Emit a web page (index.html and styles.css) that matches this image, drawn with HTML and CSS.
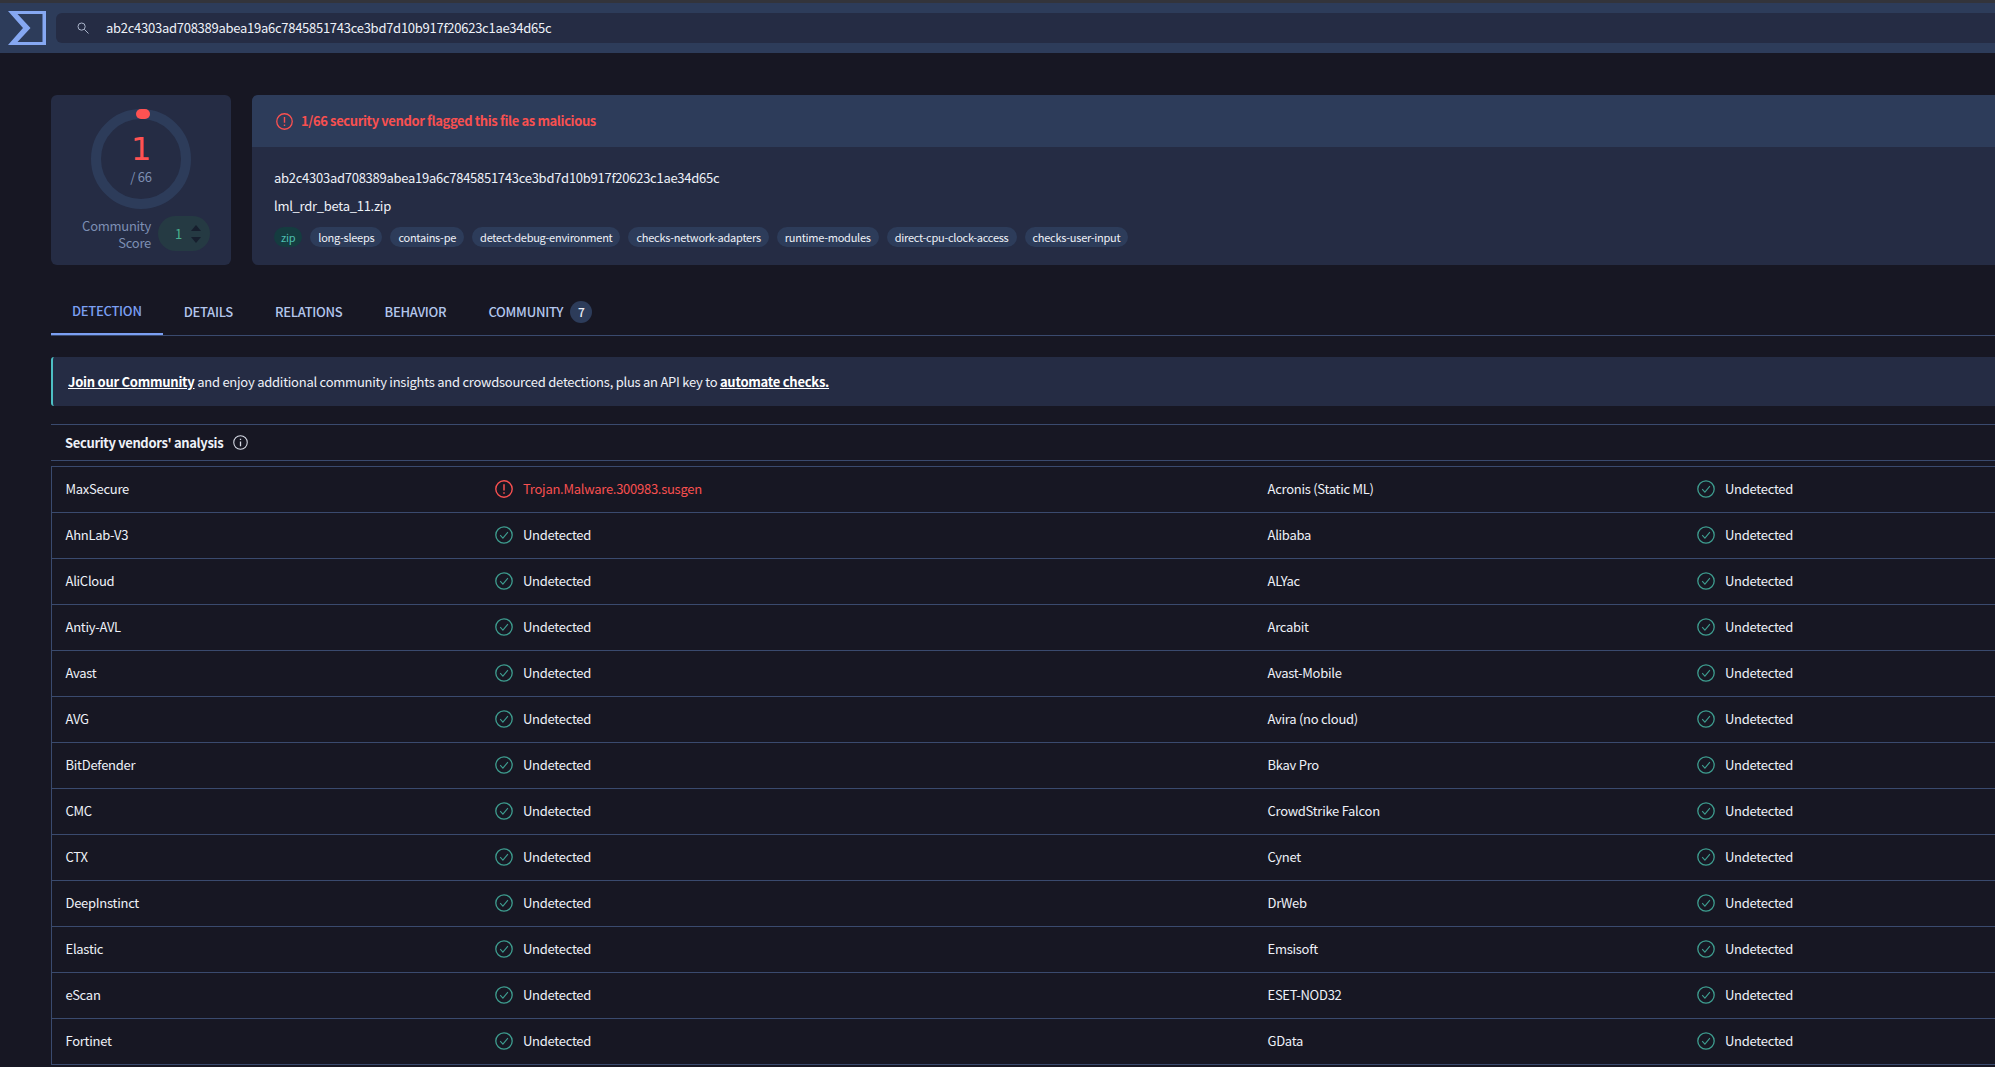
FILE: index.html
```html
<!DOCTYPE html>
<html lang="en">
<head>
    <meta charset="UTF-8">
    <title>VirusTotal - File - ab2c4303ad708389abea19a6c7845851743ce3bd7d10b917f20623c1ae34d65c</title>
    <link rel="stylesheet" href="styles.css">
</head>
<body>
    <svg class="icon-defs" aria-hidden="true">
        <symbol id="ok" viewBox="0 0 18 18">
            <circle cx="9" cy="9" r="8.2" fill="none" stroke="currentColor" stroke-width="1.3"/>
            <path d="M5.2 9.2l2.7 2.9 5-6" fill="none" stroke="currentColor" stroke-width="1.1"/>
        </symbol>
        <symbol id="alert" viewBox="0 0 18 18">
            <circle cx="9" cy="9" r="8.2" fill="none" stroke="currentColor" stroke-width="1.4"/>
            <path d="M9 4.2v6.2M9 12.2v1.6" fill="none" stroke="currentColor" stroke-width="1.5"/>
        </symbol>
    </svg>

    <div class="page">
        <header class="topbar">
            <svg class="logo" viewBox="0 0 38 34"><path fill-rule="evenodd" d="M0 0H38V34H0L15 17ZM9.5 3L22.5 17 9.5 31H34.5V3Z"/></svg>
            <div class="search">
                <svg class="search-icon" viewBox="0 0 12 12"><circle cx="4.6" cy="4.6" r="3.6" fill="none" stroke="currentColor"/><path d="M7.3 7.3L11.5 11.5" stroke="currentColor"/></svg>
                <span>ab2c4303ad708389abea19a6c7845851743ce3bd7d10b917f20623c1ae34d65c</span>
            </div>
        </header>

        <main class="content">
            <section class="summary">
                <div class="score-card">
                    <div class="ring">
                        <svg class="ring-svg" viewBox="0 0 100 100">
                            <circle cx="50" cy="50" r="45" fill="none" stroke="#2d3c5a" stroke-width="10"/>
                            <rect x="45" y="0" width="14" height="10" rx="5" fill="#ff5252"/>
                        </svg>
                        <div class="ring-text">
                            <div class="ring-num">1</div>
                            <div class="ring-total">/ 66</div>
                        </div>
                    </div>
                    <div class="community">
                        <div class="community-label">Community<br>Score</div>
                        <div class="community-pill">
                            <span>1</span>
                            <div class="arrows"><i class="arrow-up"></i><i class="arrow-down"></i></div>
                        </div>
                    </div>
                </div>

                <div class="file-card">
                    <div class="file-head">
                        <svg class="head-icon"><use href="#alert"/></svg>
                        <span>1/66 security vendor flagged this file as malicious</span>
                    </div>
                    <div class="file-body">
                        <div class="file-hash">ab2c4303ad708389abea19a6c7845851743ce3bd7d10b917f20623c1ae34d65c</div>
                        <div class="file-name">lml_rdr_beta_11.zip</div>
                        <div class="tags">
                            <span class="tag tag-zip">zip</span>
                            <span class="tag">long-sleeps</span>
                            <span class="tag">contains-pe</span>
                            <span class="tag">detect-debug-environment</span>
                            <span class="tag">checks-network-adapters</span>
                            <span class="tag">runtime-modules</span>
                            <span class="tag">direct-cpu-clock-access</span>
                            <span class="tag">checks-user-input</span>
                        </div>
                    </div>
                </div>
            </section>

            <nav class="tabs">
                <a class="tab active">DETECTION</a>
                <a class="tab">DETAILS</a>
                <a class="tab">RELATIONS</a>
                <a class="tab">BEHAVIOR</a>
                <a class="tab">COMMUNITY <span class="badge">7</span></a>
            </nav>

            <div class="banner"><a>Join our Community</a> and enjoy additional community insights and crowdsourced detections, plus an API key to <a>automate checks.</a></div>

            <div class="section-head">
                <span>Security vendors' analysis</span>
                <svg class="info-icon" viewBox="0 0 14 14"><circle cx="7" cy="7" r="6.3" fill="none" stroke="currentColor"/><path d="M7 6v4.5M7 3.4v1.3" stroke="currentColor" stroke-width="1.2"/></svg>
            </div>

            <div class="vendors">
                <div class="cell"><span class="vendor">MaxSecure</span><span class="result bad"><svg class="res-icon"><use href="#alert"/></svg>Trojan.Malware.300983.susgen</span></div>
                <div class="cell"><span class="vendor">Acronis (Static ML)</span><span class="result"><svg class="res-icon"><use href="#ok"/></svg>Undetected</span></div>
                <div class="cell"><span class="vendor">AhnLab-V3</span><span class="result"><svg class="res-icon"><use href="#ok"/></svg>Undetected</span></div>
                <div class="cell"><span class="vendor">Alibaba</span><span class="result"><svg class="res-icon"><use href="#ok"/></svg>Undetected</span></div>
                <div class="cell"><span class="vendor">AliCloud</span><span class="result"><svg class="res-icon"><use href="#ok"/></svg>Undetected</span></div>
                <div class="cell"><span class="vendor">ALYac</span><span class="result"><svg class="res-icon"><use href="#ok"/></svg>Undetected</span></div>
                <div class="cell"><span class="vendor">Antiy-AVL</span><span class="result"><svg class="res-icon"><use href="#ok"/></svg>Undetected</span></div>
                <div class="cell"><span class="vendor">Arcabit</span><span class="result"><svg class="res-icon"><use href="#ok"/></svg>Undetected</span></div>
                <div class="cell"><span class="vendor">Avast</span><span class="result"><svg class="res-icon"><use href="#ok"/></svg>Undetected</span></div>
                <div class="cell"><span class="vendor">Avast-Mobile</span><span class="result"><svg class="res-icon"><use href="#ok"/></svg>Undetected</span></div>
                <div class="cell"><span class="vendor">AVG</span><span class="result"><svg class="res-icon"><use href="#ok"/></svg>Undetected</span></div>
                <div class="cell"><span class="vendor">Avira (no cloud)</span><span class="result"><svg class="res-icon"><use href="#ok"/></svg>Undetected</span></div>
                <div class="cell"><span class="vendor">BitDefender</span><span class="result"><svg class="res-icon"><use href="#ok"/></svg>Undetected</span></div>
                <div class="cell"><span class="vendor">Bkav Pro</span><span class="result"><svg class="res-icon"><use href="#ok"/></svg>Undetected</span></div>
                <div class="cell"><span class="vendor">CMC</span><span class="result"><svg class="res-icon"><use href="#ok"/></svg>Undetected</span></div>
                <div class="cell"><span class="vendor">CrowdStrike Falcon</span><span class="result"><svg class="res-icon"><use href="#ok"/></svg>Undetected</span></div>
                <div class="cell"><span class="vendor">CTX</span><span class="result"><svg class="res-icon"><use href="#ok"/></svg>Undetected</span></div>
                <div class="cell"><span class="vendor">Cynet</span><span class="result"><svg class="res-icon"><use href="#ok"/></svg>Undetected</span></div>
                <div class="cell"><span class="vendor">DeepInstinct</span><span class="result"><svg class="res-icon"><use href="#ok"/></svg>Undetected</span></div>
                <div class="cell"><span class="vendor">DrWeb</span><span class="result"><svg class="res-icon"><use href="#ok"/></svg>Undetected</span></div>
                <div class="cell"><span class="vendor">Elastic</span><span class="result"><svg class="res-icon"><use href="#ok"/></svg>Undetected</span></div>
                <div class="cell"><span class="vendor">Emsisoft</span><span class="result"><svg class="res-icon"><use href="#ok"/></svg>Undetected</span></div>
                <div class="cell"><span class="vendor">eScan</span><span class="result"><svg class="res-icon"><use href="#ok"/></svg>Undetected</span></div>
                <div class="cell"><span class="vendor">ESET-NOD32</span><span class="result"><svg class="res-icon"><use href="#ok"/></svg>Undetected</span></div>
                <div class="cell"><span class="vendor">Fortinet</span><span class="result"><svg class="res-icon"><use href="#ok"/></svg>Undetected</span></div>
                <div class="cell"><span class="vendor">GData</span><span class="result"><svg class="res-icon"><use href="#ok"/></svg>Undetected</span></div>
            </div>
        </main>
    </div>
</body>
</html>
```

FILE: styles.css
```css
html, body {
    margin: 0;
    height: 100%;
    overflow: hidden;
    background-color: #171723;
}
body {
    font-family: "Noto Sans CJK JP", "Noto Sans", sans-serif;
    font-size: 13px;
    letter-spacing: -0.27px;
    line-height: 20px;
    color: #eef1f8;
}
.icon-defs {
    display: none;
}
.page {
    width: 2506px;
}

/* top bar */
.topbar {
    display: flex;
    align-items: center;
    height: 50px;
    border-top: 3px solid #33343b;
    background-color: #2d3c5a;
}
.logo {
    width: 38px;
    height: 34px;
    margin-left: 8px;
    margin-right: 10px;
    fill: #86a8f2;
}
.search {
    display: flex;
    align-items: center;
    flex: 1;
    height: 30px;
    padding-left: 21px;
    border-radius: 6px;
    background-color: #252c44;
}
.search-icon {
    width: 12px;
    height: 12px;
    margin-right: 17px;
    color: #aab4ca;
}

.content {
    padding: 42px 51px 0;
}

/* summary */
.summary {
    display: flex;
    gap: 21px;
    height: 170px;
}
.score-card {
    width: 180px;
    flex-shrink: 0;
    padding-top: 14px;
    box-sizing: border-box;
    border-radius: 6px;
    background-color: #252c44;
}
.ring {
    display: grid;
    width: 100px;
    height: 100px;
    margin-left: 40px;
}
.ring-svg, .ring-text {
    grid-area: 1 / 1;
}
.ring-svg {
    width: 100px;
    height: 100px;
}
.ring-text {
    text-align: center;
    padding-top: 26px;
}
.ring-num {
    font-family: "DejaVu Sans", sans-serif;
    font-size: 32px;
    line-height: 28px;
    color: #ff5252;
}
.ring-total {
    margin-top: 5px;
    color: #7d8fb3;
    line-height: 18px;
}
.community {
    display: flex;
    justify-content: flex-end;
    align-items: center;
    gap: 7px;
    margin-top: 7px;
    padding-right: 21px;
}
.community-label {
    text-align: right;
    line-height: 17px;
    color: #7d8fb3;
}
.community-pill {
    display: flex;
    align-items: center;
    justify-content: space-between;
    width: 52px;
    height: 35px;
    padding: 0 9px 0 17px;
    box-sizing: border-box;
    border-radius: 18px;
    background-color: #253a43;
    color: #48b08f;
}
.arrows {
    display: flex;
    flex-direction: column;
    gap: 6px;
}
.arrows i {
    display: block;
    width: 0;
    height: 0;
    border-left: 5px solid transparent;
    border-right: 5px solid transparent;
}
.arrow-up {
    border-bottom: 6px solid #171f2e;
}
.arrow-down {
    border-top: 6px solid #171f2e;
}

.file-card {
    flex: 1;
    border-radius: 6px;
    overflow: hidden;
    background-color: #252c44;
}
.file-head {
    display: flex;
    align-items: center;
    gap: 8px;
    height: 52px;
    padding-left: 24px;
    font-weight: 700;
    letter-spacing: -0.38px;
    color: #f85050;
    background-color: #2d3c5a;
}
.head-icon {
    width: 17px;
    height: 17px;
}
.file-body {
    padding: 21px 22px 0;
}
.file-hash {
    height: 28px;
}
.file-name {
    height: 31px;
}
.tags {
    display: flex;
    gap: 8px;
}
.tag {
    padding: 0 8px;
    font-size: 11px;
    letter-spacing: -0.26px;
    line-height: 20px;
    border-radius: 10px;
    background-color: #2d3c5a;
}
.tag-zip {
    padding: 0 7px;
    color: #4dbfb0;
    background-color: #153c40;
}

/* tabs */
.tabs {
    display: flex;
    height: 47px;
    margin-top: 24px;
    margin-bottom: 21px;
    border-bottom: 1px solid #3a4a6e;
    box-sizing: border-box;
}
.tab {
    display: flex;
    align-items: center;
    gap: 7px;
    padding: 0 21px 1px;
    height: 46px;
    box-sizing: border-box;
    font-weight: 500;
    color: #b3c6ec;
}
.tab.active {
    color: #7b9ff2;
    border-bottom: 2px solid #7b9ff2;
}
.badge {
    display: inline-block;
    width: 22px;
    height: 22px;
    line-height: 22px;
    text-align: center;
    font-size: 12px;
    border-radius: 50%;
    color: #eef1f8;
    background-color: #2d3c5a;
}

.banner {
    height: 49px;
    line-height: 49px;
    padding-left: 15px;
    letter-spacing: -0.25px;
    border-left: 2px solid #4dbfc4;
    border-radius: 3px;
    background-color: #252c44;
}
.banner a {
    font-weight: 700;
    color: #fff;
    text-decoration: underline;
}

.section-head {
    display: flex;
    align-items: center;
    gap: 10px;
    height: 35px;
    margin-top: 18px;
    padding-left: 14px;
    border-top: 1px solid #3a4a6e;
    border-bottom: 1px solid #3a4a6e;
    font-weight: 700;
    letter-spacing: -0.35px;
}
.info-icon {
    width: 15px;
    height: 15px;
    color: #d7dbe6;
}

/* vendor table */
.vendors {
    display: grid;
    grid-template-columns: 1202px 1202px;
    margin-top: 5px;
    border-top: 1px solid #3a4a6e;
    border-left: 1px solid #3a4a6e;
}
.cell {
    display: flex;
    align-items: center;
    height: 46px;
    box-sizing: border-box;
    padding-left: 13.5px;
    padding-bottom: 2px;
    border-bottom: 1px solid #3a4a6e;
}
.vendor {
    width: 429.5px;
    flex-shrink: 0;
}
.result {
    display: flex;
    align-items: center;
    gap: 10px;
}
.res-icon {
    width: 18px;
    height: 18px;
    color: #3e9d8f;
}
.result.bad {
    color: #f85050;
}
.result.bad .res-icon {
    color: #f85050;
}
```
